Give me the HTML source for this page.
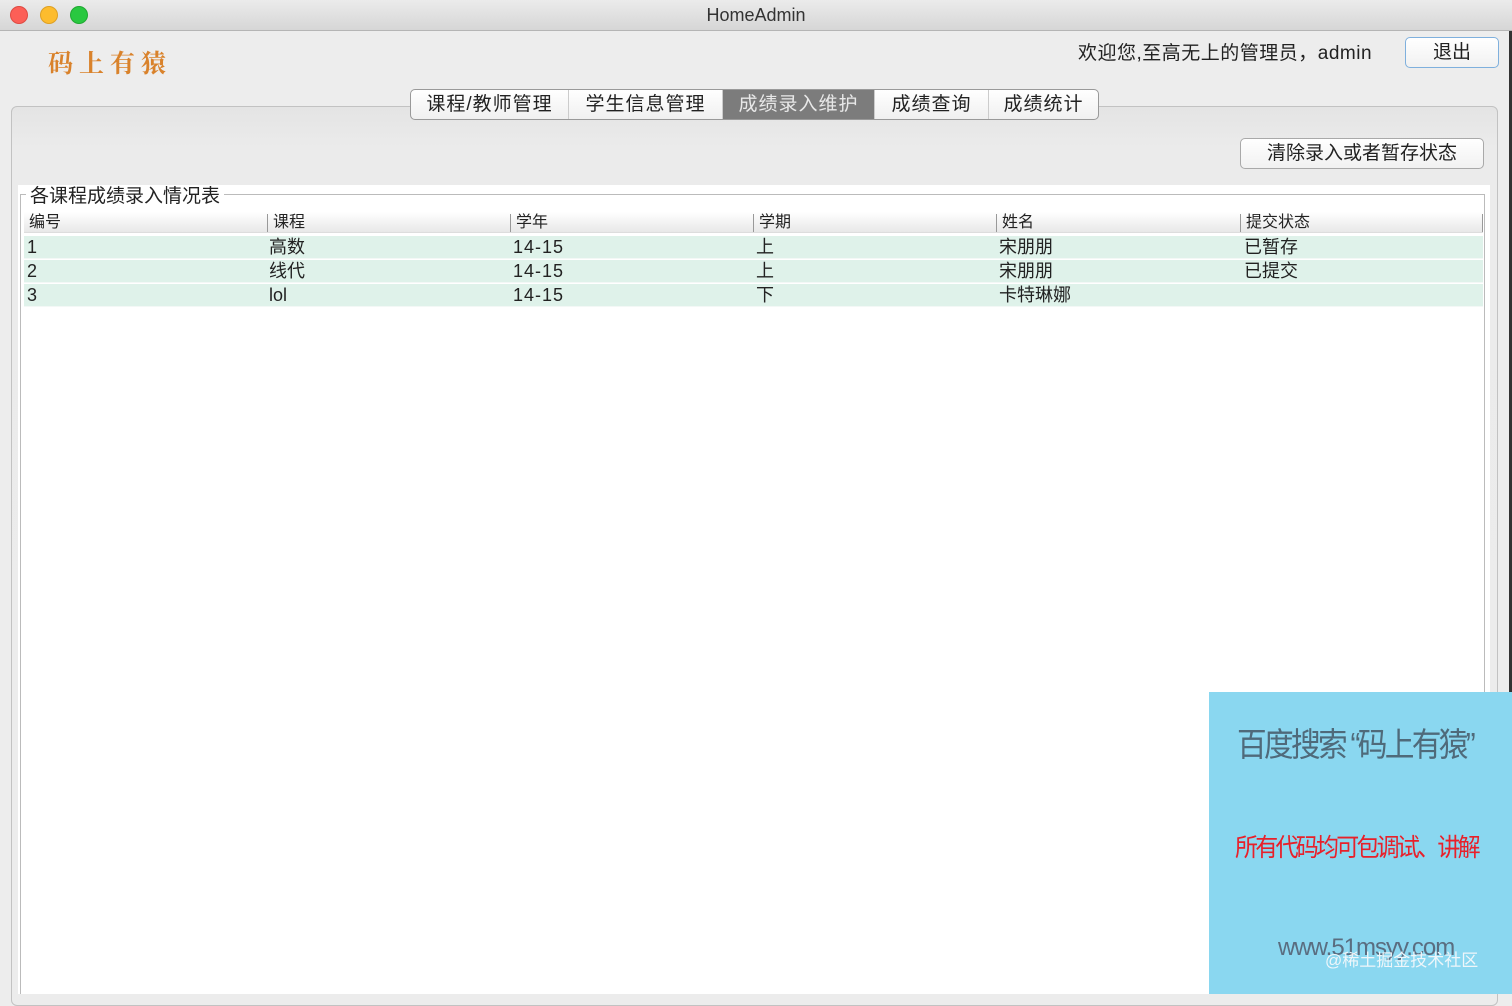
<!DOCTYPE html>
<html><head><meta charset="utf-8"><style>
*{margin:0;padding:0;box-sizing:border-box}
body{width:1512px;height:994px;overflow:hidden;background:#ededed;font-family:"Liberation Sans","Noto Sans CJK SC",sans-serif;position:relative;color:#222}
.abs{position:absolute;white-space:nowrap}
.title{left:0;top:0;width:1512px;height:31px;background:linear-gradient(#ebebeb,#d6d6d6);border-bottom:1px solid #b5b5b5;text-align:center;font-size:18px;line-height:31px;color:#333}
.dot{width:18px;height:18px;border-radius:50%;top:6px}
.btn{background:linear-gradient(#fff,#f1f1f1);border:1px solid #a9a9a9;border-radius:5px;text-align:center;font-size:19px}
.tabs{left:410px;top:89px;height:31px;display:flex;border:1px solid #999;border-radius:5px;background:linear-gradient(#fff,#f0f0f0);overflow:hidden;font-size:19px}
.tabs div{line-height:29px;border-right:1px solid #ccc;text-align:center;letter-spacing:1px}
.tabs .sel{background:#7c7c7c;color:#e8e8e8}
.row{left:24px;width:1459px;height:23px;background:#dff2ea;font-size:18px;line-height:23px;border-bottom:1px solid #f3f8f6}
.row span,.hdr span{position:absolute;top:0}
.hdr{left:24px;top:212px;width:1459px;height:21px;background:linear-gradient(#fff,#e8e8e8);font-size:16px;line-height:21px;border-bottom:1px solid #ddd}
.hdr span{border-left:1px solid #999;padding-left:5px;height:18px;line-height:18px;top:2px}
</style></head><body>
<div class="abs title">HomeAdmin</div>
<div class="abs dot" style="left:10px;background:#fc5f57;border:1px solid #de4a42"></div>
<div class="abs dot" style="left:40px;background:#fdbc2e;border:1px solid #dea023"></div>
<div class="abs dot" style="left:70px;background:#29c840;border:1px solid #1fa831"></div>
<div class="abs" style="left:1509px;top:31px;width:3px;height:963px;background:#333"></div>
<div class="abs" style="left:48px;top:44px;font-size:25px;color:#d9822b;font-family:'Noto Serif CJK SC',serif;font-weight:bold;letter-spacing:6px">码上有猿</div>
<div class="abs" style="left:1078px;top:41px;font-size:19px;line-height:26px;letter-spacing:0.5px">欢迎您,至高无上的管理员，admin</div>
<div class="abs btn" style="left:1405px;top:37px;width:94px;height:31px;line-height:29px;border-color:#7fb0dd">退出</div>
<div class="abs" style="left:11px;top:106px;width:1487px;height:900px;border:1px solid #c2c2c2;border-radius:6px;background:linear-gradient(#e4e4e4,#ebebeb 40px,#ececec)"></div>
<div class="abs tabs"><div style="width:158px">课程/教师管理</div><div style="width:154px">学生信息管理</div><div class="sel" style="width:152px">成绩录入维护</div><div style="width:114px">成绩查询</div><div style="width:109px;border:none">成绩统计</div></div>
<div class="abs btn" style="left:1240px;top:138px;width:244px;height:31px;line-height:29px">清除录入或者暂存状态</div>
<div class="abs" style="left:18px;top:185px;width:1472px;height:809px;background:#fff"></div>
<div class="abs" style="left:20px;top:194px;width:1465px;height:800px;border:1px solid #bbb;border-bottom:none"></div>
<div class="abs" style="left:26px;top:185px;background:#fff;padding:0 4px;font-size:19px;line-height:24px">各课程成绩录入情况表</div>
<div class="abs hdr"><span style="left:0;border:none">编号</span><span style="left:243px">课程</span><span style="left:486px">学年</span><span style="left:729px">学期</span><span style="left:972px">姓名</span><span style="left:1216px">提交状态</span><span style="left:1458px;padding:0"></span></div>
<div class="abs row" style="top:236px"><span style="left:3px">1</span><span style="left:245px">高数</span><span style="left:489px;letter-spacing:1px">14-15</span><span style="left:732px">上</span><span style="left:975px">宋朋朋</span><span style="left:1220px">已暂存</span></div>
<div class="abs row" style="top:260px"><span style="left:3px">2</span><span style="left:245px">线代</span><span style="left:489px;letter-spacing:1px">14-15</span><span style="left:732px">上</span><span style="left:975px">宋朋朋</span><span style="left:1220px">已提交</span></div>
<div class="abs row" style="top:284px"><span style="left:3px">3</span><span style="left:245px">lol</span><span style="left:489px;letter-spacing:1px">14-15</span><span style="left:732px">下</span><span style="left:975px">卡特琳娜</span><span style="left:1220px"></span></div>
<div class="abs" style="left:1209px;top:692px;width:303px;height:302px;background:#8ad7f0"></div>
<div class="abs" style="left:1237px;top:718px;font-size:33px;color:#4f6a7a;letter-spacing:-3px;transform:scaleX(0.9);transform-origin:left">百度搜索 “码上有猿”</div>
<div class="abs" style="left:1235px;top:828px;font-size:25px;color:#e8202a;letter-spacing:-3px;transform:scaleX(0.92);transform-origin:left">所有代码均可包调试、讲解</div>
<div class="abs" style="left:1278px;top:934px;font-size:24px;color:#5a6d80;letter-spacing:-1px">www.51msyy.com</div>
<div class="abs" style="left:1325px;top:946px;font-size:17px;color:#eef6fa">@稀土掘金技术社区</div>
</body></html>
